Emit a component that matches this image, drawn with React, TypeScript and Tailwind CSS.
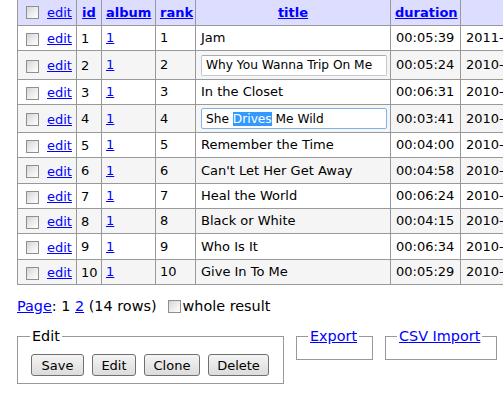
import React from "react";

const rows: { id: number; title: string; dur: string; date: string; input?: "plain" | "focus" }[] = [
  { id: 1, title: "Jam", dur: "00:05:39", date: "2011-11-14" },
  { id: 2, title: "Why You Wanna Trip On Me", dur: "00:05:24", date: "2010-11-14", input: "plain" },
  { id: 3, title: "In the Closet", dur: "00:06:31", date: "2010-11-14" },
  { id: 4, title: "She Drives Me Wild", dur: "00:03:41", date: "2010-11-14", input: "focus" },
  { id: 5, title: "Remember the Time", dur: "00:04:00", date: "2010-11-14" },
  { id: 6, title: "Can't Let Her Get Away", dur: "00:04:58", date: "2010-11-14" },
  { id: 7, title: "Heal the World", dur: "00:06:24", date: "2010-11-14" },
  { id: 8, title: "Black or White", dur: "00:04:15", date: "2010-11-14" },
  { id: 9, title: "Who Is It", dur: "00:06:34", date: "2010-11-14" },
  { id: 10, title: "Give In To Me", dur: "00:05:29", date: "2010-11-14" },
];

const heights = ["h-[25px]", "h-[29px]", "h-[25px]", "h-[28px]", "h-[25px]", "h-[26px]", "h-[25px]", "h-[25px]", "h-[26px]", "h-[25px]"];

function Box() {
  return (
    <span className="inline-block w-[13px] h-[13px] border border-[#8f8f8f] bg-gradient-to-br from-[#d4d4d4] via-[#ececec] to-[#ffffff] shrink-0" />
  );
}

const cell = "border border-[#999] px-[4px] py-0 align-middle whitespace-nowrap";
const link = "text-[#0000ff] underline";

function Btn({ children, w }: { children: React.ReactNode; w: string }) {
  return (
    <button className={`${w} h-[22px] border border-[#707070] rounded-[3px] bg-gradient-to-b from-[#f4f4f4] to-[#dcdcdc] text-[13px] text-black leading-none shrink-0`}>
      {children}
    </button>
  );
}

export default function App() {
  return (
    <div className="w-[503px] h-[400px] overflow-hidden bg-white text-black" style={{ fontFamily: '"DejaVu Sans", Verdana, sans-serif' }}>
      <table className="border-collapse table-fixed ml-[17px] mt-[-1px] text-[13px] leading-[16px] w-[533px]">
        <colgroup>
          <col className="w-[59px]" />
          <col className="w-[25px]" />
          <col className="w-[54px]" />
          <col className="w-[40px]" />
          <col className="w-[195px]" />
          <col className="w-[70px]" />
          <col className="w-[90px]" />
        </colgroup>
        <thead>
          <tr className="h-[26px] bg-[#ddddff]">
            <td className={`${cell} pl-[8px]`}>
              <div className="flex items-center">
                <Box />
                <a className={`${link} ml-[8px]`}>edit</a>
              </div>
            </td>
            <th className={`${cell} text-center`}><a className={`${link} font-bold`}>id</a></th>
            <th className={`${cell} text-center`}><a className={`${link} font-bold`}>album</a></th>
            <th className={`${cell} text-center`}><a className={`${link} font-bold`}>rank</a></th>
            <th className={`${cell} text-center`}><a className={`${link} font-bold`}>title</a></th>
            <th className={`${cell} text-center`}><a className={`${link} font-bold`}>duration</a></th>
            <th className={`${cell}`}></th>
          </tr>
        </thead>
        <tbody>
          {rows.map((r, i) => (
            <tr key={r.id} className={`${heights[i]} ${i % 2 === 1 ? "bg-[#f5f5f5]" : "bg-white"}`}>
              <td className={`${cell} pl-[8px]`}>
                <div className="flex items-center pt-[2px]">
                  <Box />
                  <a className={`${link} ml-[8px]`}>edit</a>
                </div>
              </td>
              <td className={cell}><div className="pt-[1px]">{r.id}</div></td>
              <td className={cell}><a className={link}>1</a></td>
              <td className={cell}>{r.id}</td>
              <td className={`${cell} pl-[5px]`}>
                {r.input ? (
                  <div
                    className={`w-[186px] h-[21px] border rounded-[2px] bg-white pl-[4px] flex items-center text-[12.2px] ${
                      r.input === "focus" ? "border-[#7eb4ea]" : "border-[#c5c8ce] border-t-[#abadb3]"
                    }`}
                  >
                    {r.input === "focus" ? (
                      <span>
                        She <span className="bg-[#3399ff] text-white">Drives</span> Me Wild
                      </span>
                    ) : (
                      r.title
                    )}
                  </div>
                ) : (
                  r.title
                )}
              </td>
              <td className={`${cell} pl-[5px]`}>{r.dur}</td>
              <td className={`${cell} pl-[5px]`}>{r.date}</td>
            </tr>
          ))}
        </tbody>
      </table>

      <div className="ml-[17px] mt-[12px] flex items-center text-[14.4px] leading-[18px]">
        <a className={link}>Page</a>
        <span>:&nbsp;1&nbsp;</span>
        <a className={link}>2</a>
        <span>&nbsp;(14 rows)</span>
        <span className="ml-[11px] mr-[2px] flex"><Box /></span>
        <span>whole result</span>
      </div>

      <div className="ml-[17px] mt-[12px] flex items-start gap-[12px] text-[14.4px] leading-[18px]">
        <fieldset className="border border-[#999] pl-[13px] pr-[14px] pt-[0px] pb-[7px] w-[267px] min-w-0 shrink-0">
          <legend className="px-[2px] ml-[-1px]">Edit</legend>
          <div className="flex gap-[8px] mt-[9px]">
            <Btn w="w-[53px]">Save</Btn>
            <Btn w="w-[44px]">Edit</Btn>
            <Btn w="w-[56px]">Clone</Btn>
            <Btn w="w-[61px]">Delete</Btn>
          </div>
        </fieldset>
        <fieldset className="border border-[#999] px-[11px] pb-[14px] w-[77px] min-w-0 shrink-0">
          <legend className="px-[2px]"><a className={link}>Export</a></legend>
        </fieldset>
        <fieldset className="border border-[#999] px-[11px] pb-[14px] w-[112px] min-w-0 shrink-0">
          <legend className="px-[2px]"><a className={link}>CSV Import</a></legend>
        </fieldset>
      </div>
    </div>
  );
}
